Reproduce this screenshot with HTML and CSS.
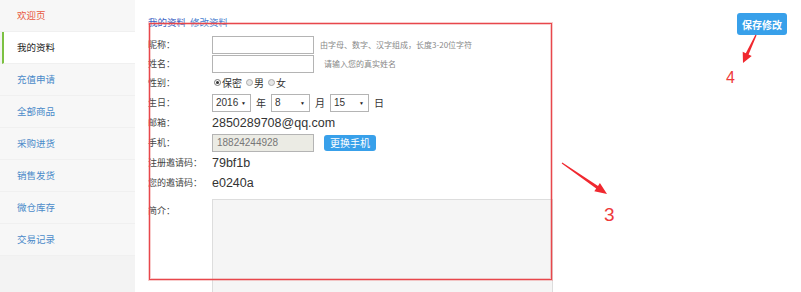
FILE: index.html
```html
<!DOCTYPE html>
<html lang="zh-CN">
<head>
    <meta charset="UTF-8">
    <title>我的资料</title>
    <link rel="stylesheet" href="styles.css">
</head>
<body>

<div class="sidebar">
    <ul class="menu">
        <li class="menu-item welcome">欢迎页</li>
        <li class="menu-item active">我的资料</li>
        <li class="menu-item">充值申请</li>
        <li class="menu-item">全部商品</li>
        <li class="menu-item">采购进货</li>
        <li class="menu-item">销售发货</li>
        <li class="menu-item">微仓库存</li>
        <li class="menu-item">交易记录</li>
    </ul>
</div>

<div class="content">
    <div class="breadcrumb"><a class="crumb-home">我的资料</a><a class="crumb">修改资料</a></div>

    <div class="profile-form">
        <div class="row">
            <label class="label">昵称：</label>
            <input class="text-input" type="text">
            <span class="hint">由字母、数字、汉字组成，长度3-20位字符</span>
        </div>
        <div class="row">
            <label class="label">姓名：</label>
            <input class="text-input" type="text">
            <span class="hint hint-wide">请输入您的真实姓名</span>
        </div>
        <div class="row">
            <label class="label">性别：</label>
            <span class="radio checked"></span><span class="radio-text">保密</span>
            <span class="radio"></span><span class="radio-text">男</span>
            <span class="radio"></span><span class="radio-text">女</span>
        </div>
        <div class="row row-lg">
            <label class="label">生日：</label>
            <span class="select">2016<i class="caret">▼</i></span><span class="unit">年</span>
            <span class="select">8<i class="caret">▼</i></span><span class="unit">月</span>
            <span class="select">15<i class="caret">▼</i></span><span class="unit">日</span>
        </div>
        <div class="row">
            <label class="label">邮箱：</label>
            <span class="value">2850289708@qq.com</span>
        </div>
        <div class="row row-lg">
            <label class="label">手机：</label>
            <input class="text-input disabled" type="text" value="18824244928" disabled>
            <button class="btn btn-small">更换手机</button>
        </div>
        <div class="row">
            <label class="label">注册邀请码：</label>
            <span class="value">79bf1b</span>
        </div>
        <div class="row row-lg">
            <label class="label">您的邀请码：</label>
            <span class="value">e0240a</span>
        </div>
        <div class="row-area">
            <label class="label label-top">简介：</label>
            <textarea class="intro"></textarea>
        </div>
    </div>
</div>

<div class="toolbar">
    <button class="btn btn-save">保存修改</button>
</div>

<!-- annotations drawn over the screenshot -->
<div class="mark-box"></div>
<svg class="mark-arrows" width="801" height="292" viewBox="0 0 801 292">
    <polygon points="562.3,162.6 598,186 599.9,183.1 607,194 594.3,191.3 596.2,188.4 561.7,163.4" fill="#f0282f"/>
    <polygon points="756.6,35.3 748.6,54.5 751.7,56 743,63 742.7,51.8 745.8,53.3 755.4,34.7" fill="#f0282f"/>
</svg>
<span class="mark-num num-3">3</span>
<span class="mark-num num-4">4</span>

</body>
</html>
```

FILE: styles.css
```css
body {
    margin: 0;
    padding: 0;
    display: flex;
    height: 100vh;
    position: relative;
    overflow: hidden;
    font-family: "Noto Sans CJK SC", "Noto Sans", sans-serif;
    color: #333;
    background: #fff;
}
.sidebar {
    width: 135px;
    flex-shrink: 0;
    background: #f3f3f3;
}
.menu {
    list-style: none;
    margin: 0;
    padding: 0;
}
.menu-item {
    height: 31px;
    line-height: 31px;
    padding-left: 17px;
    font-size: 9.5px;
    color: #4a8ac9;
    background: #f7f7f7;
    border-bottom: 1px solid #f0f0f0;
}
.menu-item.welcome {
    color: #e8573e;
}
.menu-item.active {
    color: #222;
    background: #fff;
    margin-left: 2px;
    padding-left: 13px;
    border-left: 2px solid #7cc142;
}
.content {
    padding: 16px 0 0 13px;
    width: 420px;
}
.breadcrumb {
    font-size: 9.5px;
    line-height: 12px;
    margin-bottom: 7px;
}
.crumb-home {
    color: #3a62c4;
    margin-right: 4px;
}
.crumb {
    color: #4a7fd0;
}
.row {
    display: flex;
    align-items: center;
    height: 19px;
}
.row-lg {
    height: 21px;
}
.label {
    width: 64px;
    flex-shrink: 0;
    font-size: 9px;
    color: #444;
}
.text-input {
    box-sizing: border-box;
    width: 102px;
    height: 18px;
    margin: 0;
    padding: 0 4px;
    border: 1px solid #b4b4b4;
    background: #fff;
    font-family: "Liberation Sans", sans-serif;
    font-size: 10px;
}
.text-input.disabled {
    background: #ebebe4;
    color: #777;
}
.hint {
    margin-left: 6px;
    font-size: 8px;
    color: #888;
}
.hint-wide {
    margin-left: 10px;
}
.radio {
    box-sizing: border-box;
    width: 7px;
    height: 7px;
    border-radius: 50%;
    border: 1px solid #aaa;
    background: #e6e6e6;
    margin: 0 1px 0 2px;
    position: relative;
}
.radio.checked {
    background: #fff;
    border-color: #777;
}
.radio.checked::after {
    content: "";
    position: absolute;
    left: 1px;
    top: 1px;
    width: 3px;
    height: 3px;
    border-radius: 50%;
    background: #333;
}
.radio-text {
    font-size: 10px;
    margin-right: 2px;
}
.select {
    box-sizing: border-box;
    width: 39px;
    height: 18px;
    border: 1px solid #b4b4b4;
    padding-left: 3px;
    font-family: "Liberation Sans", sans-serif;
    font-size: 10px;
    line-height: 16px;
    position: relative;
}
.caret {
    position: absolute;
    right: 4px;
    top: 0;
    font-style: normal;
    font-size: 5px;
    color: #222;
}
.unit {
    font-size: 10px;
    margin: 0 5px 0 5px;
}
.value {
    font-family: "Liberation Sans", sans-serif;
    font-size: 12.5px;
    color: #333;
}
.btn {
    border: none;
    border-radius: 3px;
    background: #38a0ea;
    color: #fff;
    font-family: "Noto Sans CJK SC", sans-serif;
    cursor: pointer;
    padding: 0;
}
.btn-small {
    width: 52px;
    height: 16px;
    margin-left: 10px;
    font-size: 10px;
}
.row-area {
    display: flex;
    margin-top: 6px;
}
.label-top {
    padding-top: 5px;
}
.intro {
    box-sizing: border-box;
    width: 341px;
    height: 110px;
    margin: 0;
    border: 1px solid #ddd;
    background: #f5f5f5;
    resize: none;
}
.toolbar {
    flex: 1;
    display: flex;
    justify-content: flex-end;
    align-items: flex-start;
    padding: 13px 14px 0 0;
}
.btn-save {
    width: 50px;
    height: 22px;
    font-size: 10px;
    font-weight: bold;
}
.mark-box {
    position: absolute;
    left: 149px;
    top: 23px;
    width: 401px;
    height: 255px;
    border: 1px solid #e8474c;
    box-shadow: 0 0 0 1px rgba(235, 110, 110, 0.35), inset 0 0 0 1px rgba(235, 110, 110, 0.35);
}
.mark-arrows {
    position: absolute;
    left: 0;
    top: 0;
}
.mark-num {
    position: absolute;
    color: #ee3a3a;
    font-family: "Liberation Sans", sans-serif;
    line-height: 1;
}
.num-3 {
    left: 604px;
    top: 205px;
    font-size: 19px;
}
.num-4 {
    left: 726px;
    top: 70px;
    font-size: 16px;
}
```
